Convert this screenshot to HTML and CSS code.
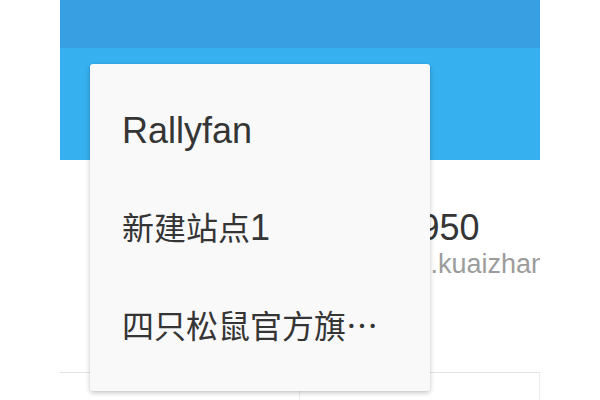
FILE: index.html
```html
<!DOCTYPE html>
<html lang="zh-CN">
<head>
<meta charset="utf-8">
<title>站点</title>
<link rel="stylesheet" href="styles.css">
</head>
<body>
<div class="page">
  <header class="topbar"></header>
  <section class="hero"></section>
  <section class="site-info">
    <div class="avatar"></div>
    <div class="site-meta">
      <div class="site-id">ID: 1950</div>
      <div class="site-url">rallyfan.kuaizhan.com</div>
    </div>
  </section>
  <div class="stats">
    <div class="stat">访问量</div>
    <div class="stat">粉丝</div>
  </div>
  <ul class="site-menu">
    <li class="menu-item">Rallyfan</li>
    <li class="menu-item"><span class="cjk">新建站点</span>1</li>
    <li class="menu-item menu-item--cjk">四只松鼠官方旗舰店</li>
  </ul>
</div>
</body>
</html>
```

FILE: styles.css
```css
html, body {
  margin: 0;
  padding: 0;
  background: #ffffff;
}

body {
  font-family: "Liberation Sans", "Noto Sans CJK SC", sans-serif;
  color: #333333;
}

.page {
  position: relative;
  width: 480px;
  height: 400px;
  margin: 0 auto;
  overflow: hidden;
  background: #ffffff;
}

.topbar {
  height: 48px;
  background: #389fe2;
}

.hero {
  height: 112px;
  background: #36b0ee;
}

.site-info {
  display: flex;
  align-items: flex-start;
  box-sizing: border-box;
  height: 212px;
  padding: 47.5px 0 0 163.5px;
}

.avatar {
  flex: none;
  width: 96px;
  height: 96px;
  margin-right: 24px;
  border-radius: 50%;
  background: #e8e8e8;
}

.site-meta {
  flex: none;
}

.site-id {
  font-size: 36px;
  line-height: 40px;
  color: #353535;
  white-space: nowrap;
}

.site-url {
  font-size: 27px;
  line-height: 32px;
  color: #9c9c9c;
  white-space: nowrap;
}

.stats {
  display: grid;
  grid-template-columns: 1fr 1fr;
  border-top: 1px solid #e2e2e2;
  height: 60px;
}

.stat {
  border-right: 1px solid #ececec;
  color: #ffffff;
  font-size: 14px;
}

.site-menu {
  position: absolute;
  left: 30px;
  top: 64px;
  width: 340px;
  margin: 0;
  padding: 18px 0;
  list-style: none;
  background: #f9f9f9;
  border-radius: 3px;
  box-shadow: 0 2px 5px rgba(0, 0, 0, 0.22), 0 0 2px rgba(0, 0, 0, 0.06);
}

.menu-item {
  height: 97px;
  padding: 0 32px;
  font-size: 36px;
  line-height: 97px;
  color: #353535;
  white-space: nowrap;
  overflow: hidden;
  text-overflow: ellipsis;
}

.cjk {
  font-family: "Noto Sans CJK SC", sans-serif;
  font-size: 32px;
  line-height: 1;
}

.menu-item--cjk {
  font-family: "Noto Sans CJK SC", sans-serif;
  font-size: 32px;
}
```
